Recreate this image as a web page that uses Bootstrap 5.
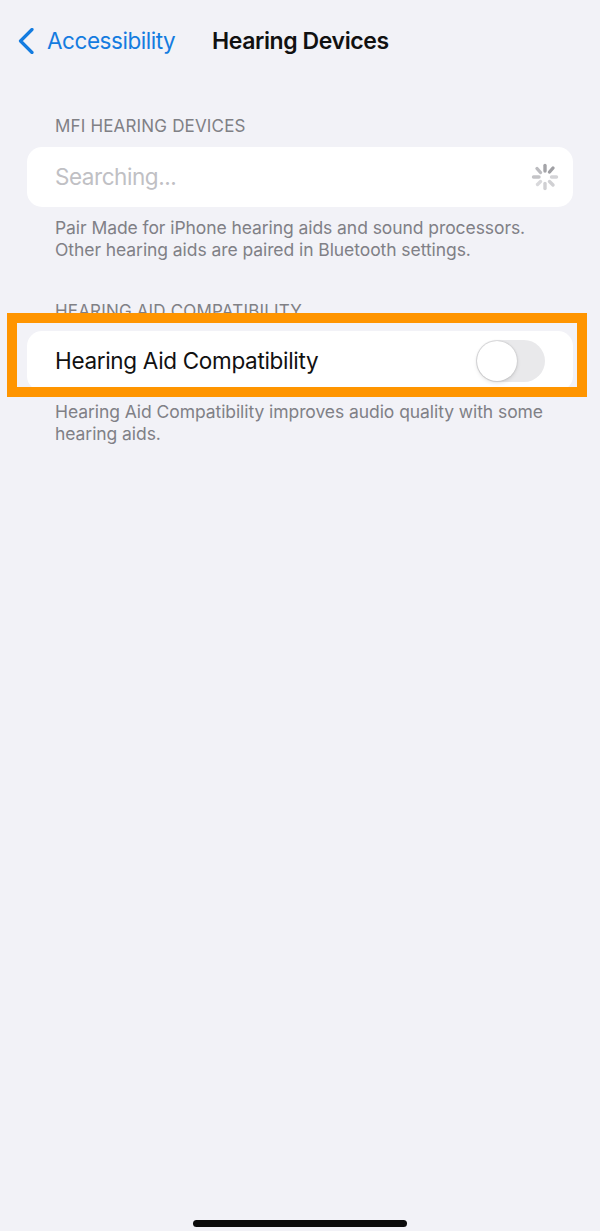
<!DOCTYPE html>
<html lang="en">
<head>
<meta charset="utf-8">
<title>Hearing Devices</title>
<link href="https://cdn.jsdelivr.net/npm/bootstrap@5.3.0/dist/css/bootstrap.min.css" rel="stylesheet">
<style>
html,body{height:100%}
body{background:#f2f2f7;font-family:Inter,"Liberation Sans",sans-serif;overflow:hidden}
.screen{height:1231px;display:flex;flex-direction:column;padding:0 27px}
.topbar{height:24px;margin-top:29px;margin-left:-9px;color:#147ce0;line-height:24px}
.backtxt{margin-left:13px;width:165px;font-size:22.5px;letter-spacing:-.45px}
.pagetitle{font-size:23px;font-weight:600;color:#111;letter-spacing:-.4px}
.sect-head{margin:0 0 0 28px;color:#808085;font-size:17px;line-height:20px;letter-spacing:.17px}
.ios-row{background:#fff;border-radius:15px;height:60px;padding:0 28px;font-size:22.5px;letter-spacing:-.32px;color:#111}
.foot-note{margin:10px 0 0 28px;color:#808086;font-size:17.5px;line-height:22px;letter-spacing:-.07px}
.muted-val{color:#c0c0c4;letter-spacing:-.45px}
.first-head{margin-top:63px}
.first-row{margin-top:11px}
.second-wrap{position:relative;margin-top:40px}
.orange-frame{position:absolute;left:-20px;right:-14px;top:12px;height:84px;border:10px solid #ff9500;pointer-events:none}
.row-two{margin-top:10px}
.toggle-track{width:69px;height:42px;border-radius:21px;background:#e9e9eb;position:relative}
.toggle-knob{position:absolute;left:1px;top:1px;width:40px;height:40px;border-radius:50%;background:#fff;box-shadow:0 0 2px rgba(0,0,0,.22),0 2px 4px rgba(0,0,0,.1)}
.home-pill{width:214px;height:7px;border-radius:4px;background:#0b0b0b;margin:auto auto 4px}
.spin{margin-right:-14px}
</style>
</head>
<body>
<div class="screen">
  <div class="topbar d-flex align-items-center">
    <svg width="16" height="26" viewBox="0 0 16 26" aria-hidden="true"><path d="M14 1.500 2.500 13 14 24.500" fill="none" stroke="#147ce0" stroke-width="3.200" stroke-linecap="round" stroke-linejoin="round"/></svg>
    <span class="backtxt">Accessibility</span>
    <span class="pagetitle">Hearing Devices</span>
  </div>

  <p class="sect-head first-head">MFI HEARING DEVICES</p>
  <div class="ios-row first-row d-flex align-items-center justify-content-between">
    <span class="muted-val">Searching...</span>
    <svg class="spin" width="28" height="28" viewBox="0 0 28 28" aria-hidden="true" stroke-width="3.400" stroke-linecap="round">
      <path d="M14 2.500V8" stroke="#a4a4a8"/>
      <path d="M22 5 18.500 9" stroke="#a0a0a4"/>
      <path d="M25.500 14H20.500" stroke="#d4d4d7"/>
      <path d="M22 22 18.500 18.500" stroke="#d0d0d3"/>
      <path d="M14 25.500V20.500" stroke="#d0d0d3"/>
      <path d="M6.500 21.500 9.500 18.500" stroke="#d8d8db"/>
      <path d="M2.500 14H8" stroke="#c4c4c7"/>
      <path d="M6 5.500 9.500 9.500" stroke="#bcbcc0"/>
    </svg>
  </div>
  <p class="foot-note">Pair Made for iPhone hearing aids and sound processors.<br>Other hearing aids are paired in Bluetooth settings.</p>

  <div class="second-wrap">
    <p class="sect-head">HEARING AID COMPATIBILITY</p>
    <div class="ios-row row-two d-flex align-items-center justify-content-between">
      <span>Hearing Aid Compatibility</span>
      <span class="toggle-track"><span class="toggle-knob"></span></span>
    </div>
    <div class="orange-frame"></div>
  </div>
  <p class="foot-note">Hearing Aid Compatibility improves audio quality with some<br>hearing aids.</p>

  <div class="home-pill"></div>
</div>
<script src="https://cdn.jsdelivr.net/npm/bootstrap@5.3.0/dist/js/bootstrap.bundle.min.js"></script>
</body>
</html>
